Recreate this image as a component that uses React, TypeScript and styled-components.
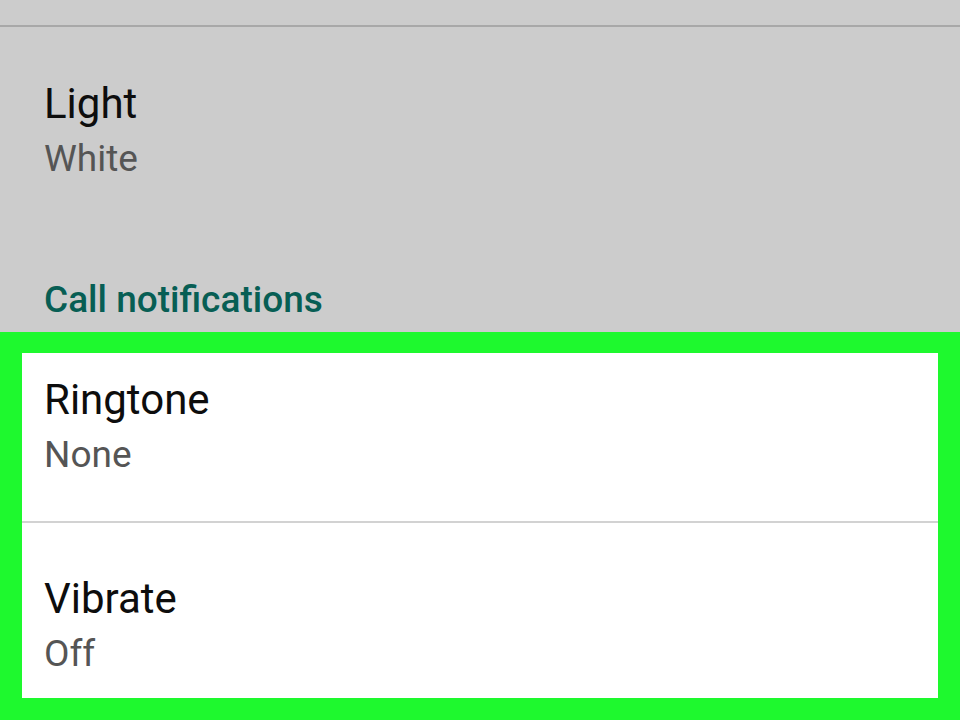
import React from 'react';
import styled, { createGlobalStyle } from 'styled-components';

const GlobalStyle = createGlobalStyle`
  html, body {
    margin: 0;
    padding: 0;
    background: #cccccc;
    overflow: hidden;
  }
  body {
    font-family: Roboto, "Noto Sans", "Liberation Sans", sans-serif;
  }
`;

type Item = {
  title: string;
  summary: string;
  top: number;
  bottom: number;
};

const callItems: Item[] = [
  { title: 'Ringtone', summary: 'None', top: 23, bottom: 42 },
  { title: 'Vibrate', summary: 'Off', top: 52, bottom: 20 },
];

const App: React.FC = () => {
  return (
    <>
      <GlobalStyle />
      <Screen>
        <TopDivider />
        <Pref $top={53} $bottom={95} $inset={44}>
          <PrefTitle>Light</PrefTitle>
          <PrefSummary>White</PrefSummary>
        </Pref>
        <CategoryTitle>Call notifications</CategoryTitle>
        <Highlight>
          <Panel>
            {callItems.map((item, i) => (
              <React.Fragment key={item.title}>
                {i > 0 && <PanelDivider />}
                <Pref $top={item.top} $bottom={item.bottom} $inset={22}>
                  <PrefTitle>{item.title}</PrefTitle>
                  <PrefSummary>{item.summary}</PrefSummary>
                </Pref>
              </React.Fragment>
            ))}
          </Panel>
        </Highlight>
      </Screen>
    </>
  );
};

const Screen = styled.div`
  width: 960px;
  height: 720px;
  display: flex;
  flex-direction: column;
  background: #cccccc;
  padding-top: 25px;
  box-sizing: border-box;
`;

const TopDivider = styled.div`
  height: 2px;
  background: #a8a8a8;
`;

const Pref = styled.div<{ $top: number; $bottom: number; $inset: number }>`
  display: flex;
  flex-direction: column;
  gap: 7px;
  padding: ${(p) => p.$top}px ${(p) => p.$inset}px ${(p) => p.$bottom}px;
`;

const PrefTitle = styled.div`
  font-size: 42px;
  line-height: 48px;
  color: #0d0d0d;
`;

const PrefSummary = styled.div`
  font-size: 37px;
  line-height: 48px;
  color: #555555;
`;

const CategoryTitle = styled.div`
  padding: 0 44px 10px;
  font-size: 37px;
  line-height: 44px;
  font-weight: 500;
  color: #075e54;
`;

const Highlight = styled.div`
  flex: 1;
  background: #1ef92e;
  padding: 21px 22px 22px;
  display: flex;
`;

const Panel = styled.div`
  flex: 1;
  background: #ffffff;
  display: flex;
  flex-direction: column;
`;

const PanelDivider = styled.div`
  height: 2px;
  background: #d2d2d2;
`;

export default App;
